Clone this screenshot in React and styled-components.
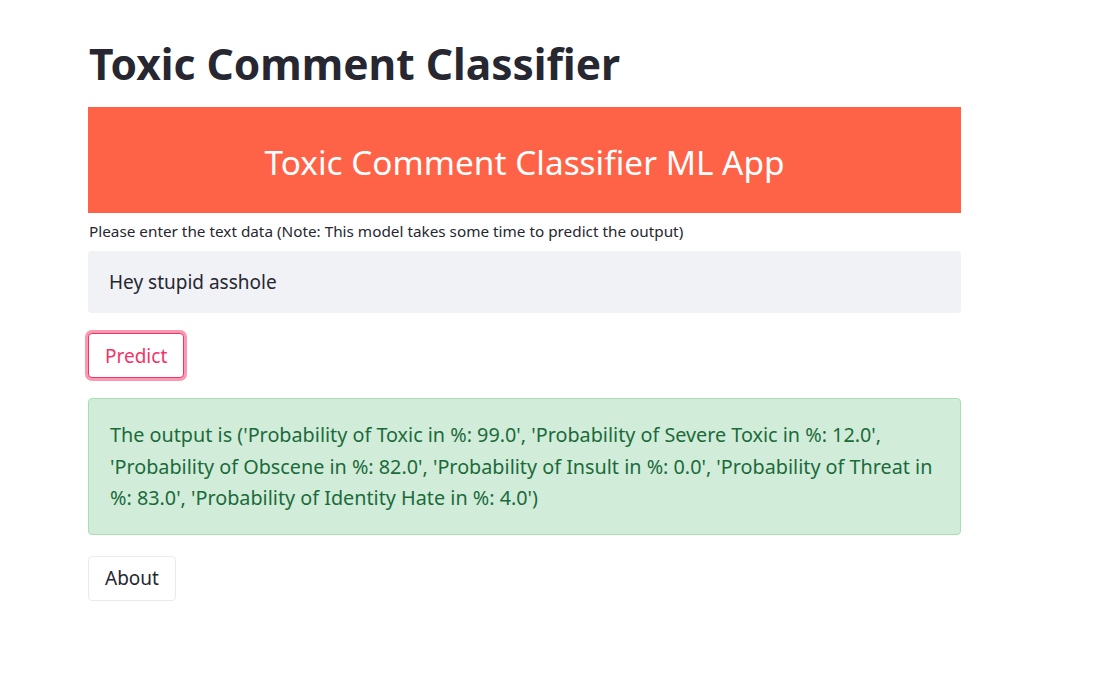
import React from 'react';
import styled, { createGlobalStyle } from 'styled-components';

const GlobalStyle = createGlobalStyle`
    body {
        margin: 0;
        background: #ffffff;
        font-family: "Noto Sans", "Open Sans", sans-serif;
        color: #262730;
    }
`;

const Main = styled.div`
    width: 873px;
    margin-left: 88px;
    padding-top: 34px;
    display: flex;
    flex-direction: column;
`;

const Title = styled.h1`
    margin: 0 0 13px 1px;
    font-size: 42.5px;
    font-weight: 700;
    line-height: 60px;
    color: #262730;
`;

const Banner = styled.div`
    height: 106px;
    background: tomato;
    display: flex;
    align-items: center;
    justify-content: center;
`;

const BannerText = styled.h2`
    margin: 4px 0 0;
    font-size: 33.4px;
    font-weight: 400;
    color: #ffffff;
`;

const Label = styled.label`
    margin: 8px 0 0 1px;
    font-size: 15.3px;
    line-height: 20px;
    color: #262730;
`;

const Input = styled.div`
    margin-top: 10px;
    height: 62px;
    box-sizing: border-box;
    padding: 0 21px;
    background: #f0f2f6;
    border-radius: 4px;
    display: flex;
    align-items: center;
    font-size: 19px;
    color: #262730;
`;

const Button = styled.button`
    align-self: flex-start;
    margin-top: ${(p) => p.$top}px;
    height: 45px;
    padding: 0 16px;
    background: #ffffff;
    border: 1px solid ${(p) => (p.$active ? '#f63366' : '#e6eaf1')};
    border-radius: 4px;
    box-shadow: ${(p) => (p.$active ? '0 0 0 3px rgba(246, 51, 102, 0.5)' : 'none')};
    font-family: inherit;
    font-size: 19px;
    color: ${(p) => (p.$active ? '#f63366' : '#262730')};
`;

const Alert = styled.div`
    margin-top: 20px;
    padding: 20px 21px;
    background: #d1edda;
    border: 1px solid #a8dfb6;
    border-radius: 4px;
    font-size: 19.8px;
    line-height: 31.5px;
    color: #1b6a3a;
    white-space: pre-line;
`;

const output = [
    "The output is ('Probability of Toxic in %: 99.0', 'Probability of Severe Toxic in %: 12.0',",
    "'Probability of Obscene in %: 82.0', 'Probability of Insult in %: 0.0', 'Probability of Threat in",
    "%: 83.0', 'Probability of Identity Hate in %: 4.0')",
];

function App() {
    return (
        <>
            <GlobalStyle />
            <Main>
                <Title>Toxic Comment Classifier</Title>
                <Banner>
                    <BannerText>Toxic Comment Classifier ML App</BannerText>
                </Banner>
                <Label>Please enter the text data (Note: This model takes some time to predict the output)</Label>
                <Input>Hey stupid asshole</Input>
                <Button $active $top={20}>Predict</Button>
                <Alert>{output.join('\n')}</Alert>
                <Button $top={21}>About</Button>
            </Main>
        </>
    );
}

export default App;
